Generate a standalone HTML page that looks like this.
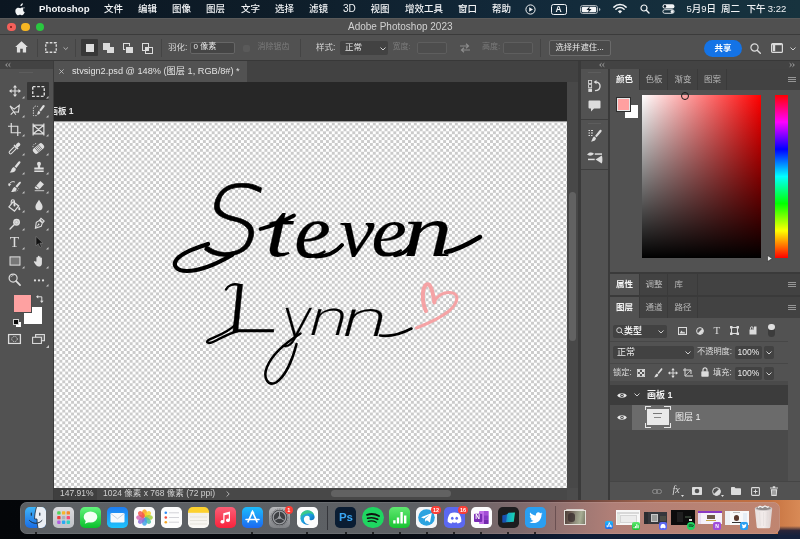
<!DOCTYPE html>
<html lang="zh-CN">
<head>
<meta charset="utf-8">
<title>Adobe Photoshop 2023</title>
<style>
*{box-sizing:border-box;margin:0;padding:0}
html,body{width:800px;height:539px;overflow:hidden;background:#05070b}
body{font-family:"Liberation Sans","Noto Sans CJK SC",sans-serif;font-size:9px;color:#ddd;position:relative;-webkit-font-smoothing:antialiased}
.abs{position:absolute}
.t{position:absolute;white-space:nowrap;line-height:12px;height:12px}
svg{position:absolute;overflow:visible}
/* ---------- menu bar ---------- */
#menubar{left:0;top:0;width:800px;height:18px;background:linear-gradient(90deg,#0b1621 0%,#0e1d29 35%,#12293a 65%,#17333e 100%)}
#menubar .t{color:#f2f4f6;font-size:9.5px;top:3px;font-weight:500}
/* ---------- ps window ---------- */
#titlebar{left:0;top:18px;width:800px;height:16px;background:#505050;border-top:1px solid #5a5a5a}
#optbar{left:0;top:34px;width:800px;height:27px;background:#515151;border-top:1px solid #3b3b3b;border-bottom:1px solid #383838}
#optbar .t{font-size:8.5px;color:#d6d6d6;top:6px}
#optbar .dim{color:#7b7b7b}
.inp{position:absolute;background:#454545;border:1px solid #666;border-radius:2px}
.sep{position:absolute;width:1px;background:#444}
/* ---------- tools ---------- */
#tools{left:0;top:61px;width:54px;height:438.600px;background:#525252;border-right:1.500px solid #3c3c3c}
#toolhead{left:0;top:0;width:53px;height:8px;background:#434343}
/* ---------- document ---------- */
#tabbar{left:54px;top:61px;width:524px;height:21px;background:#424242}
#doctab{left:0;top:0;width:193px;height:21px;background:#525252}
#canvasbg{left:54px;top:82px;width:513px;height:406px;background:#272727}
#checker{left:0;top:38.500px;width:513px;height:367.500px;border-top:1px solid #9a9a9a;
 background-color:#fff;
 background-image:conic-gradient(#cbcbcb 25%,transparent 0 50%,#cbcbcb 0 75%,transparent 0);
 background-size:5.860px 5.860px;background-position:-0.500px 0.500px}
#vscroll{left:567px;top:82px;width:11px;height:406px;background:#484848}
#vthumb{left:2px;top:110px;width:7px;height:149px;border-radius:4px;background:#626262}
#status{left:54px;top:488px;width:524px;height:11.600px;background:#484848}
#status .t{font-size:8.5px;color:#d0d0d0;top:-1px}
#hthumb{left:277px;top:2px;width:120px;height:7px;border-radius:4px;background:#626262}
.sigw{position:absolute;left:0;top:0;height:100px;line-height:100px;font-size:100px;font-family:"Liberation Serif",serif;color:#000;white-space:nowrap}
.sigw span{display:inline-block;vertical-align:top;height:100px;transform-origin:0 0}
/* ---------- right side ---------- */
#gap1{left:578px;top:61px;width:3px;height:438.600px;background:#3a3a3a}
#strip{left:581px;top:61px;width:27px;height:438.600px;background:#525252}
#striphead{left:0;top:0;width:27px;height:8px;background:#434343}
#gap2{left:608px;top:61px;width:2px;height:438.600px;background:#3a3a3a}
#right{left:610px;top:61px;width:190px;height:438.600px;background:#525252}
.ptabs{position:absolute;left:0;width:190px;background:#424242}
.ptab{position:absolute;top:0;height:100%;background:#424242;border-right:1px solid #3a3a3a}
.ptab.on{background:#525252}
.ptabs .t{font-size:8.5px;color:#b8b8b8}
.ptabs .t.on{color:#f4f4f4;font-weight:bold}
.dd{position:absolute;background:#424242;border-radius:2px}
#right .t{font-size:8.5px;color:#d8d8d8}
/* ---------- dock ---------- */
#dock{left:20.300px;top:501.700px;width:759.500px;height:32.800px;border-radius:7px;
 background:linear-gradient(90deg,#5b5f63 0%,#5d6064 52%,#7f6a6c 66%,#b07f77 78%,#c08570 100%);
 box-shadow:0 0 0 0.5px rgba(255,255,255,.18) inset}
.di{position:absolute;top:5px;width:22px;height:22px;border-radius:5px}
.dot{position:absolute;top:29px;width:2px;height:2px;border-radius:1px;background:#0b0b0b}
</style>
</head>
<body>
<div id="app" style="position:absolute;left:0;top:0;width:800px;height:539px;overflow:hidden;will-change:transform">
<!-- wallpaper bits visible under the window -->
<div class="abs" id="wall" style="left:0;top:499px;width:800px;height:40px;background:linear-gradient(90deg,#040609 0%,#06090e 52%,#3c2a30 66%,#a8684f 82%,#c5713f 96%,#d88a56 100%)"></div>
<div class="abs" style="left:0;top:534px;width:800px;height:5px;background:linear-gradient(90deg,#040609 0%,#070b12 50%,#0f1c34 72%,#10203a 100%)"></div>
<div class="abs" style="left:778px;top:526px;width:22px;height:13px;background:linear-gradient(180deg,rgba(40,30,50,0),#2a2438 35%,#14203c 75%)"></div>

<!-- MENUBAR -->
<div class="abs" id="menubar">
<svg style="left:14.500px;top:2.500px" width="10" height="12" viewBox="0 0 170 200"><path fill="#f2f4f6" d="M150 68c-1 1-22 12-22 39 0 31 27 42 28 42 0 1-4 15-14 29-9 12-18 25-32 25s-18-8-34-8c-16 0-22 9-35 9s-22-12-32-27C-3 158-10 126 2 102c9-18 27-29 45-29 14 0 26 9 34 9 8 0 21-10 37-10 6 0 28 1 42 21zM113 32c7-8 11-19 11-30 0-2 0-3 0-4-11 0-24 7-31 16-6 7-12 18-12 29 0 2 0 3 1 4 1 0 2 0 3 0 10 0 22-6 28-15z" transform="translate(10,4)"/></svg>
<span class="t" style="left:39px;font-weight:bold;font-size:9.700px">Photoshop</span>
<span class="t" style="left:104px">文件</span>
<span class="t" style="left:138px">编辑</span>
<span class="t" style="left:172px">图像</span>
<span class="t" style="left:206px">图层</span>
<span class="t" style="left:241px">文字</span>
<span class="t" style="left:275px">选择</span>
<span class="t" style="left:309px">滤镜</span>
<span class="t" style="left:343px;font-size:10px">3D</span>
<span class="t" style="left:370.5px">视图</span>
<span class="t" style="left:405px">增效工具</span>
<span class="t" style="left:458px">窗口</span>
<span class="t" style="left:492px">帮助</span>
<!-- status icons -->
<svg style="left:525px;top:3.5px" width="11" height="11" viewBox="0 0 11 11"><circle cx="5.5" cy="5.5" r="4.6" fill="none" stroke="#f2f4f6" stroke-width="1"/><path d="M4.2 3.2 8 5.5 4.2 7.8z" fill="#f2f4f6"/></svg>
<div class="abs" style="left:551px;top:3.5px;width:16px;height:11px;border:1.2px solid #f2f4f6;border-radius:2.5px"></div>
<span class="t" style="left:555.5px;top:3px;font-size:8.5px;font-weight:bold">A</span>
<svg style="left:580px;top:5px" width="21" height="9" viewBox="0 0 21 9"><rect x="0.5" y="0.5" width="17" height="8" rx="2.2" fill="none" stroke="#aeb5bb" stroke-width="1"/><rect x="1.8" y="1.8" width="14.4" height="5.4" rx="1.2" fill="#f2f4f6"/><path d="M19 3v3c.9-.2 1.4-.8 1.4-1.500S19.900 3.200 19 3z" fill="#aeb5bb"/><path d="M9.800 1.200 6.500 5h2.300L8 7.900 11.500 4H9.200z" fill="#0d1b27"/></svg>
<svg style="left:613px;top:4px" width="14" height="10" viewBox="0 0 14 10"><path d="M7 9.600 9.100 7.300a3 3 0 0 0-4.200 0z" fill="#f2f4f6"/><path d="M2.900 5.300a5.800 5.800 0 0 1 8.200 0" fill="none" stroke="#f2f4f6" stroke-width="1.500" stroke-linecap="round"/><path d="M0.900 3.100a8.600 8.600 0 0 1 12.200 0" fill="none" stroke="#f2f4f6" stroke-width="1.500" stroke-linecap="round"/></svg>
<svg style="left:640px;top:4px" width="10" height="10" viewBox="0 0 10 10"><circle cx="4" cy="4" r="3" fill="none" stroke="#f2f4f6" stroke-width="1.200"/><path d="M6.300 6.300 9 9" stroke="#f2f4f6" stroke-width="1.400" stroke-linecap="round"/></svg>
<svg style="left:662px;top:4px" width="13" height="10" viewBox="0 0 13 10"><rect x="0.500" y="0.300" width="12" height="4.200" rx="2.100" fill="#f2f4f6"/><circle cx="2.900" cy="2.400" r="1.300" fill="#0d1b27"/><rect x="0.900" y="5.700" width="11.200" height="3.600" rx="1.800" fill="none" stroke="#f2f4f6" stroke-width=".9"/><circle cx="10.100" cy="7.500" r="1.500" fill="#f2f4f6"/></svg>
<span class="t" style="left:686.500px">5月9日<span style="display:inline-block;width:4.800px"> </span>周二</span>
<span class="t" style="left:746.500px">下午<span style="display:inline-block;width:2.300px"></span>3:22</span>
</div>
<!-- TITLE -->
<div class="abs" id="titlebar">
<div class="abs" style="left:7px;top:3.500px;width:8.500px;height:8.500px;border-radius:50%;background:#f4605a"></div>
<div class="abs" style="left:10.200px;top:6.700px;width:2.200px;height:2.200px;border-radius:50%;background:#7a1410"></div>
<div class="abs" style="left:21.300px;top:3.500px;width:8.500px;height:8.500px;border-radius:50%;background:#f6b623"></div>
<div class="abs" style="left:35.700px;top:3.500px;width:8.500px;height:8.500px;border-radius:50%;background:#2ac840"></div>
<span class="t" style="left:348px;top:1.500px;font-size:10px;color:#d2d2d2">Adobe Photoshop 2023</span>
</div>
<!-- OPTIONS -->
<div class="abs" id="optbar">
<!-- coordinates inside optbar: y offset 35 -->
<svg style="left:15px;top:6px" width="13" height="12" viewBox="0 0 13 12"><path d="M6.500 0.300 0.200 6h1.700v5.600h3.300V7.800h2.600v3.800h3.300V6h1.700z" fill="#e0e0e0"/></svg>
<div class="sep" style="left:37px;top:4px;height:18px"></div>
<svg style="left:45px;top:7px" width="12" height="11" viewBox="0 0 12 11"><rect x="0.750" y="0.750" width="10.500" height="9.500" fill="none" stroke="#dcdcdc" stroke-width="1.300" stroke-dasharray="2.600 1.400"/></svg>
<svg style="left:63.200px;top:12px" width="5.500" height="3.200" viewBox="0 0 7 4"><path d="M0.700 0.500 3.500 3.200 6.300 0.500" fill="none" stroke="#cfcfcf" stroke-width="1"/></svg>
<div class="sep" style="left:75px;top:4px;height:18px"></div>
<div class="abs" style="left:81px;top:4px;width:17px;height:17px;background:#383838;border-radius:1px"></div>
<div class="abs" style="left:86px;top:9px;width:7.500px;height:7.500px;background:#dedede"></div>
<!-- add to selection -->
<div class="abs" style="left:103px;top:8px;width:7px;height:6.500px;background:#dcdcdc"></div>
<div class="abs" style="left:107px;top:11.500px;width:6.500px;height:6.500px;background:#dcdcdc"></div>
<!-- subtract -->
<div class="abs" style="left:122.500px;top:8px;width:7px;height:7px;border:1.200px solid #dcdcdc"></div>
<div class="abs" style="left:126px;top:11.500px;width:6.500px;height:6.500px;background:#dcdcdc;box-shadow:-0.8px -0.8px 0 #515151"></div>
<!-- intersect -->
<div class="abs" style="left:141.500px;top:8px;width:7.500px;height:7.500px;border:1.200px solid #dcdcdc"></div>
<div class="abs" style="left:145px;top:11.500px;width:7.500px;height:7.500px;border:1.200px solid #dcdcdc"></div>
<div class="abs" style="left:145px;top:11.500px;width:4px;height:4px;background:#dcdcdc"></div>
<div class="sep" style="left:161px;top:4px;height:18px"></div>
<span class="t" style="left:168px">羽化:</span>
<div class="inp" style="left:190px;top:7px;width:45px;height:12px"></div>
<span class="t" style="left:193.500px;font-size:8px;color:#e6e6e6">0 像素</span>
<div class="abs" style="left:243px;top:9.500px;width:7px;height:7px;border-radius:2px;background:#5a5a5a"></div>
<span class="t dim" style="left:257.500px;font-size:8px">消除锯齿</span>
<div class="sep" style="left:300px;top:4px;height:18px"></div>
<span class="t" style="left:316px">样式:</span>
<div class="dd" style="left:340px;top:6px;width:48px;height:14px"></div>
<span class="t" style="left:345px;color:#e6e6e6">正常</span>
<svg style="left:380px;top:11.500px" width="6" height="4" viewBox="0 0 6 4"><path d="M0.500 0.500 3 3 5.500 0.500" fill="none" stroke="#cfcfcf" stroke-width="1"/></svg>
<span class="t dim" style="left:392.500px;font-size:8px">宽度:</span>
<div class="inp" style="left:417px;top:7px;width:30px;height:12px;border-color:#5e5e5e;background:#4d4d4d"></div>
<svg style="left:459px;top:8px" width="12" height="10" viewBox="0 0 12 10"><path d="M1 3h8M7 0.800 9.500 3 7 5.200M11 7H3M5 4.800 2.500 7 5 9.200" fill="none" stroke="#8c8c8c" stroke-width="1.200"/></svg>
<span class="t dim" style="left:482px;font-size:8px">高度:</span>
<div class="inp" style="left:502.500px;top:7px;width:30px;height:12px;border-color:#5e5e5e;background:#4d4d4d"></div>
<div class="sep" style="left:540px;top:4px;height:18px"></div>
<div class="abs" style="left:549px;top:5px;width:62px;height:16px;border:1px solid #6a6a6a;border-radius:2px;background:#4a4a4a"></div>
<span class="t" style="left:555.500px;font-size:8.300px;color:#e8e8e8">选择并遮住...</span>
<div class="abs" style="left:704px;top:4.500px;width:38px;height:17px;border-radius:8.500px;background:#1473e6"></div>
<span class="t" style="left:714.500px;top:6.500px;color:#fff;font-weight:bold">共享</span>
<svg style="left:750px;top:7.500px" width="11" height="11" viewBox="0 0 11 11"><circle cx="4.500" cy="4.500" r="3.600" fill="none" stroke="#dcdcdc" stroke-width="1.200"/><path d="M7.200 7.200 10.300 10.300" stroke="#dcdcdc" stroke-width="1.400" stroke-linecap="round"/></svg>
<svg style="left:771px;top:8px" width="12" height="10" viewBox="0 0 12 10"><rect x="0.600" y="0.600" width="10.800" height="8.800" rx="1" fill="none" stroke="#dcdcdc" stroke-width="1.200"/><rect x="1.800" y="1.800" width="2.400" height="6.400" fill="#dcdcdc"/><rect x="1.200" y="0.600" width="9.600" height="1.600" fill="#dcdcdc"/></svg>
<svg style="left:789.500px;top:11.500px" width="6" height="4" viewBox="0 0 6 4"><path d="M0.500 0.500 3 3 5.500 0.500" fill="none" stroke="#cfcfcf" stroke-width="1"/></svg>
</div>
<!-- TOOLS -->
<div class="abs" id="tools"><div class="abs" id="toolhead"></div>
<svg style="left:4.500px;top:2px" width="6" height="4" viewBox="0 0 6 4"><path d="M2.500 0.300 0.700 2 2.500 3.700M5.300 0.300 3.500 2 5.300 3.700" fill="none" stroke="#bdbdbd" stroke-width=".8"/></svg>
<div class="abs" style="left:19px;top:11px;width:14px;height:1px;background:#666;opacity:.6"></div>
<div class="abs" style="left:27px;top:21px;width:22px;height:17.500px;background:#363636;border-radius:1px"></div>
<svg style="left:8.5px;top:24px" width="12" height="12" viewBox="0 0 14 14"><path d="M7 1.200V12.800M1.200 7H12.800" fill="none" stroke="#dedede" stroke-width="1.300"/><path d="M7 0 9.400 3H4.600zM7 14 4.600 11H9.400zM0 7 3 4.600V9.400zM14 7 11 9.400V4.600z" fill="#dedede"/></svg>
<svg style="left:21.5px;top:34.5px" width="2.500" height="2.500" viewBox="0 0 3 3"><path d="M3 0v3H0z" fill="#c4c4c4"/></svg>
<svg style="left:32px;top:23.5px" width="13" height="13" viewBox="0 0 14 14"><rect x="0.800" y="1.800" width="12.400" height="10.400" fill="none" stroke="#dedede" stroke-width="1.500" stroke-dasharray="3 1.700"/></svg>
<svg style="left:45.5px;top:34.5px" width="2.500" height="2.500" viewBox="0 0 3 3"><path d="M3 0v3H0z" fill="#c4c4c4"/></svg>
<svg style="left:8.5px;top:43px" width="12" height="12" viewBox="0 0 14 14"><path d="M1.200 2.200 6 6 12 1.500 11 9.500 5.500 9 2 12.500M5.500 9 3.500 6.200 1.200 2.200M5.500 9l2.500 3.500" fill="none" stroke="#dedede" stroke-width="1.300" stroke-width="1.100"/></svg>
<svg style="left:21.5px;top:53.5px" width="2.500" height="2.500" viewBox="0 0 3 3"><path d="M3 0v3H0z" fill="#c4c4c4"/></svg>
<svg style="left:32px;top:42.5px" width="13" height="13" viewBox="0 0 14 14"><path d="M5 12.500H1.500V5A3 3 0 0 1 6.500 3" fill="none" stroke="#dedede" stroke-width="1" stroke-dasharray="1.500 1.200"/><path d="M13.300 1.300c.6.600.4 1.400-.2 2.100L9.500 8.200 7.800 6.600 11.400 1.700c.6-.7 1.300-1 1.900-.4zM7.300 7.300 8.900 8.900C8.700 10.600 7.300 11.600 5.200 11.400 6.200 10.500 5.900 8.200 7.300 7.300z" fill="#dedede"/></svg>
<svg style="left:45.5px;top:53.5px" width="2.500" height="2.500" viewBox="0 0 3 3"><path d="M3 0v3H0z" fill="#c4c4c4"/></svg>
<svg style="left:8px;top:61.5px" width="13" height="13" viewBox="0 0 14 14"><path d="M3.500 0V10.500H14M0 3.500H10.500V14" fill="none" stroke="#dedede" stroke-width="1.300" stroke-width="1.500"/></svg>
<svg style="left:21.5px;top:72.5px" width="2.500" height="2.500" viewBox="0 0 3 3"><path d="M3 0v3H0z" fill="#c4c4c4"/></svg>
<svg style="left:32px;top:61.5px" width="13" height="13" viewBox="0 0 14 14"><path d="M1.200 2.200H12.800V11.800H1.200zM1.200 2.200 12.800 11.800M12.800 2.200 1.200 11.800M1.200 0.500V13.500M12.800 0.500V13.500" fill="none" stroke="#dedede" stroke-width="1.300" stroke-width="1.200"/></svg>
<svg style="left:45.5px;top:72.5px" width="2.500" height="2.500" viewBox="0 0 3 3"><path d="M3 0v3H0z" fill="#c4c4c4"/></svg>
<svg style="left:8px;top:80.5px" width="13" height="13" viewBox="0 0 14 14"><g transform="rotate(45 7 7)"><rect x="5.500" y="5" width="3" height="9.500" rx="1.500" fill="none" stroke="#dedede" stroke-width="1.100"/><rect x="4" y="3.800" width="6" height="1.700" fill="#dedede"/><rect x="5.100" y="-1" width="3.800" height="5" rx="1.800" fill="#dedede"/></g></svg>
<svg style="left:21.5px;top:91.5px" width="2.500" height="2.500" viewBox="0 0 3 3"><path d="M3 0v3H0z" fill="#c4c4c4"/></svg>
<svg style="left:32px;top:80.5px" width="13" height="13" viewBox="0 0 14 14"><g transform="rotate(-40 7 7)"><rect x="0.500" y="3.600" width="13" height="6.800" rx="2.400" fill="#dedede"/><path d="M4.600 3.500v7M6.200 3.500v7M7.800 3.500v7M9.400 3.500v7" stroke="#525252" stroke-width=".7"/></g><path d="M1 5.500C1 2.500 3.500 1 5.500 2" fill="none" stroke="#dedede" stroke-width=".9" stroke-dasharray="1.200 1"/></svg>
<svg style="left:45.5px;top:91.5px" width="2.500" height="2.500" viewBox="0 0 3 3"><path d="M3 0v3H0z" fill="#c4c4c4"/></svg>
<svg style="left:8.5px;top:100px" width="12" height="12" viewBox="0 0 14 14"><path d="M13 0.600c.7.600.5 1.400-.1 2.100L8.600 8.100 6.500 6.300 10.900 1c.6-.7 1.400-.9 2.100-.4zM5.700 7 8 9C8.300 12 5.200 14 0.800 13.300 3 12 2.600 7.800 5.700 7z" fill="#dedede"/></svg>
<svg style="left:21.5px;top:110.5px" width="2.500" height="2.500" viewBox="0 0 3 3"><path d="M3 0v3H0z" fill="#c4c4c4"/></svg>
<svg style="left:32.5px;top:100px" width="12" height="12" viewBox="0 0 14 14"><path d="M7 0.800a2.300 2.300 0 0 1 2.300 2.300c0 1.200-1 1.700-1 3.200V7.500H12.500V10H1.500V7.500H5.700V6.300c0-1.500-1-2-1-3.200A2.300 2.300 0 0 1 7 0.800zM1.500 11H12.500V12.700H1.500z" fill="#dedede"/></svg>
<svg style="left:45.5px;top:110.5px" width="2.500" height="2.500" viewBox="0 0 3 3"><path d="M3 0v3H0z" fill="#c4c4c4"/></svg>
<svg style="left:8px;top:118.5px" width="13" height="13" viewBox="0 0 14 14"><g transform="translate(2.500,1.500) scale(.85)"><path d="M13 0.600c.7.600.5 1.400-.1 2.100L8.600 8.100 6.500 6.300 10.900 1c.6-.7 1.400-.9 2.100-.4zM5.700 7 8 9C8.300 12 5.200 14 0.800 13.300 3 12 2.600 7.800 5.700 7z" fill="#dedede"/></g><path d="M1 6A4.500 4.500 0 0 1 7.500 2.200" fill="none" stroke="#dedede" stroke-width="1"/><path d="M0 3.800 3.500 4.200 1.200 7z" fill="#dedede"/><path d="M8 12.500A5 5 0 0 0 11.500 9" fill="none" stroke="#dedede" stroke-width=".8" stroke-dasharray="1 1"/></svg>
<svg style="left:21.5px;top:129.5px" width="2.500" height="2.500" viewBox="0 0 3 3"><path d="M3 0v3H0z" fill="#c4c4c4"/></svg>
<svg style="left:32.5px;top:119px" width="12" height="12" viewBox="0 0 14 14"><path d="M8.500 1.300 12.800 5 7.600 10.800H4L1.800 8.900z" fill="#dedede"/><path d="M3.300 6.800 7.700 10.600" stroke="#525252" stroke-width=".9"/><path d="M2 12.500H13" stroke="#dedede" stroke-width="1"/></svg>
<svg style="left:45.5px;top:129.5px" width="2.500" height="2.500" viewBox="0 0 3 3"><path d="M3 0v3H0z" fill="#c4c4c4"/></svg>
<svg style="left:8px;top:137.5px" width="13" height="13" viewBox="0 0 14 14"><path d="M5.500 3 11.500 7.500 7 13 1 8.500z" fill="none" stroke="#dedede" stroke-width="1.300" stroke-width="1.200"/><path d="M3.500 5V2.500a1.700 1.700 0 0 1 3.400 0V6" fill="none" stroke="#dedede" stroke-width="1.300" stroke-width="1"/><path d="M7 5.200 7 7" stroke="#dedede" stroke-width="2" stroke-linecap="round"/><path d="M11.500 7.500c1 1.300 1.800 2.600 1.800 3.500a1.100 1.100 0 0 1-2.200 0c0-.9.400-2.200.4-3.500z" fill="#dedede"/></svg>
<svg style="left:21.5px;top:148.5px" width="2.500" height="2.500" viewBox="0 0 3 3"><path d="M3 0v3H0z" fill="#c4c4c4"/></svg>
<svg style="left:32.5px;top:138px" width="12" height="12" viewBox="0 0 14 14"><path d="M7 0.800C8.500 3.800 11.200 6 11.200 9A4.200 4.200 0 0 1 2.800 9C2.800 6 5.500 3.800 7 0.800z" fill="#dedede"/></svg>
<svg style="left:45.5px;top:148.5px" width="2.500" height="2.500" viewBox="0 0 3 3"><path d="M3 0v3H0z" fill="#c4c4c4"/></svg>
<svg style="left:8.5px;top:156.5px" width="12" height="12" viewBox="0 0 14 14"><circle cx="8.800" cy="5" r="4" fill="#dedede"/><circle cx="8.800" cy="5" r="2" fill="none" stroke="#9a9a9a" stroke-width=".6"/><path d="M6 8 1.200 12.800" stroke="#dedede" stroke-width="1.600" stroke-linecap="round"/></svg>
<svg style="left:21.5px;top:167px" width="2.500" height="2.500" viewBox="0 0 3 3"><path d="M3 0v3H0z" fill="#c4c4c4"/></svg>
<svg style="left:32.5px;top:156.5px" width="12" height="12" viewBox="0 0 14 14"><g transform="rotate(40 7 7)"><path d="M7 13.500 3.300 7.500 4.800 3.500H9.200L10.700 7.500z" fill="none" stroke="#dedede" stroke-width="1.300" stroke-width="1.100"/><path d="M7 13V8.500" stroke="#dedede" stroke-width=".9"/><circle cx="7" cy="7.600" r="1" fill="#dedede"/><rect x="4.600" y="0.500" width="4.800" height="2.200" fill="none" stroke="#dedede" stroke-width="1.300" stroke-width="1"/></g></svg>
<svg style="left:45.5px;top:167px" width="2.500" height="2.500" viewBox="0 0 3 3"><path d="M3 0v3H0z" fill="#c4c4c4"/></svg>
<span class="t" style="left:7.500px;top:172px;width:14px;height:18px;line-height:18px;text-align:center;font-family:'Liberation Serif',serif;font-size:15.500px;color:#dedede">T</span>
<svg style="left:21.5px;top:185.5px" width="2.500" height="2.500" viewBox="0 0 3 3"><path d="M3 0v3H0z" fill="#c4c4c4"/></svg>
<svg style="left:32.5px;top:175px" width="12" height="12" viewBox="0 0 14 14"><path d="M3.500 0.500V11.500L6.200 9 8 13.200 9.800 12.400 8 8.300H11.600z" fill="#111" stroke="#8a8a8a" stroke-width=".6"/></svg>
<svg style="left:45.5px;top:185.5px" width="2.500" height="2.500" viewBox="0 0 3 3"><path d="M3 0v3H0z" fill="#c4c4c4"/></svg>
<svg style="left:8.5px;top:194px" width="12" height="12" viewBox="0 0 14 14"><rect x="1.200" y="2.200" width="11.600" height="9.600" fill="#777" stroke="#dedede" stroke-width="1.200"/></svg>
<svg style="left:21.5px;top:204.5px" width="2.500" height="2.500" viewBox="0 0 3 3"><path d="M3 0v3H0z" fill="#c4c4c4"/></svg>
<svg style="left:32.5px;top:194px" width="12" height="12" viewBox="0 0 14 14"><path d="M4 7.500V3a.8.800 0 0 1 1.600 0V6.500 1.800a.8.800 0 0 1 1.600 0V6.300 2.200a.8.800 0 0 1 1.600 0V6.600 3.600a.8.800 0 0 1 1.600 0V9.500c0 2.500-1.500 4-3.800 4C4.500 13.500 3.500 12 1.200 8.500 0.600 7.600 1.800 6.800 2.600 7.700z" fill="#dedede"/></svg>
<svg style="left:45.5px;top:204.5px" width="2.500" height="2.500" viewBox="0 0 3 3"><path d="M3 0v3H0z" fill="#c4c4c4"/></svg>
<svg style="left:8px;top:212px" width="13" height="13" viewBox="0 0 14 14"><circle cx="5.500" cy="5.500" r="4.300" fill="none" stroke="#dedede" stroke-width="1.300" stroke-width="1.200"/><path d="M8.800 8.800 13 13" stroke="#dedede" stroke-width="1.800" stroke-linecap="round"/><path d="M3 4.500A3 3 0 0 1 6 2.700" fill="none" stroke="#dedede" stroke-width=".7"/></svg>
<svg style="left:32.5px;top:212.5px" width="12" height="12" viewBox="0 0 14 14"><circle cx="2.300" cy="7.500" r="1.300" fill="#dedede"/><circle cx="7" cy="7.500" r="1.300" fill="#dedede"/><circle cx="11.700" cy="7.500" r="1.300" fill="#dedede"/></svg>
<svg style="left:45.5px;top:223px" width="2.500" height="2.500" viewBox="0 0 3 3"><path d="M3 0v3H0z" fill="#c4c4c4"/></svg>
<div class="abs" style="left:24px;top:245.500px;width:18px;height:17.500px;background:#fff"></div>
<div class="abs" style="left:12.500px;top:233px;width:19px;height:18.500px;background:#fea1a1;border:1px solid #4a4a4a;border-left-color:#525252;border-top-color:#525252"></div>
<svg style="left:36px;top:234px" width="8" height="8" viewBox="0 0 8 8"><path d="M1.500 1.800H5.800V6.200" fill="none" stroke="#dedede" stroke-width="1"/><path d="M0 1.800 2.200 0V3.600zM5.800 8 4 5.800H7.600z" fill="#dedede"/></svg>
<div class="abs" style="left:15.500px;top:260.500px;width:5px;height:5px;background:#fff"></div><div class="abs" style="left:13px;top:258px;width:5.500px;height:5.500px;background:#0a0a0a;border:1px solid #d0d0d0"></div>
<svg style="left:8px;top:273px" width="13" height="10" viewBox="0 0 13 11" preserveAspectRatio="none"><rect x="0.600" y="0.600" width="11.800" height="9.800" fill="none" stroke="#dedede" stroke-width="1.300"/><circle cx="6.500" cy="5.500" r="2.800" fill="none" stroke="#dedede" stroke-width=".9" stroke-dasharray="1.300 1"/></svg>
<svg style="left:32px;top:273px" width="13" height="10" viewBox="0 0 13 11" preserveAspectRatio="none"><rect x="3.600" y="0.600" width="8.800" height="6.800" fill="#6a6a6a" stroke="#dedede" stroke-width="1.100"/><rect x="0.600" y="3.600" width="8.800" height="6.800" fill="#525252" stroke="#dedede" stroke-width="1.100"/></svg>
<svg style="left:46px;top:283.500px" width="3" height="3" viewBox="0 0 3 3"><path d="M3 0v3H0z" fill="#c4c4c4"/></svg>
</div>
<!-- DOC -->
<div class="abs" id="tabbar"><div class="abs" id="doctab"></div>
<svg style="left:5px;top:8px" width="5" height="5" viewBox="0 0 5 5"><path d="M0.400 0.400 4.600 4.600M4.600 0.400 0.400 4.600" stroke="#c8c8c8" stroke-width=".8"/></svg>
<span class="t" style="left:18px;top:4px;font-size:9.200px;color:#e2e2e2">stvsign2.psd @ 148% (图层 1, RGB/8#) *</span>
</div>
<div class="abs" id="canvasbg" style="overflow:hidden"><div class="abs" id="checker"></div>
<span class="t" style="left:-4.500px;top:23px;font-size:8.500px;font-weight:bold;color:#e4e4e4">画板 1</span>
<div class="abs" id="sig" aria-label="Steven Lynn" style="left:0;top:0;width:513px;height:406px">
<div class="sigw"><span style="font-family:'DejaVu Sans',sans-serif;font-weight:200;-webkit-text-stroke:.6px #000;transform:matrix(0.989,0,-0.213,0.967,158.4,91.8)">S</span><span style="font-family:'Liberation Serif',serif;font-style:italic;-webkit-text-stroke:.3px #000;transform:matrix(0.960,0,0.000,0.765,148.2,110.3)">t</span><span style="font-family:'Liberation Serif',serif;font-style:italic;-webkit-text-stroke:.3px #000;transform:matrix(0.821,0,0.000,0.771,149.3,110.9)">e</span><span style="font-family:'Liberation Serif',serif;font-style:italic;-webkit-text-stroke:.3px #000;transform:matrix(0.791,0,0.000,0.723,149.2,113.9)">v</span><span style="font-family:'Liberation Serif',serif;font-style:italic;-webkit-text-stroke:.3px #000;transform:matrix(0.795,0,0.000,0.729,137.6,113.4)">e</span><span style="font-family:'Liberation Serif',serif;font-style:italic;-webkit-text-stroke:.3px #000;transform:matrix(0.988,0,0.000,0.745,125.1,111.8)">n</span></div>
<div class="sigw"><span style="font-family:'DejaVu Sans',sans-serif;font-weight:200;-webkit-text-stroke:.4px #000;transform:matrix(1.012,0,-0.066,0.658,172.0,194.4)">L</span><span style="font-family:'DejaVu Sans',sans-serif;font-weight:200;-webkit-text-stroke:.4px #000;transform:matrix(0.542,0,-0.064,0.531,174.6,210.1)">y</span><span style="font-family:'DejaVu Sans',sans-serif;font-weight:200;-webkit-text-stroke:.4px #000;transform:matrix(0.659,0,-0.128,0.473,145.8,213.5)">n</span><span style="font-family:'DejaVu Sans',sans-serif;font-weight:200;-webkit-text-stroke:.4px #000;transform:matrix(0.780,0,-0.130,0.482,115.1,213.3)">n</span></div>
<svg style="left:0;top:0" width="513" height="406" viewBox="54 82 513 406" fill="none" stroke="#000" stroke-linecap="round" stroke-linejoin="round"><path d="M232 255C220 262 202 271 187 271C176 271 172 265 177 259C183 252 196 248 208 244" stroke-width="4.200"/><path d="M260.500 229C272 226 284 221 294 215.500" stroke-width="3.800"/><path d="M316 256.500C327 256.500 336 252 342 245" stroke-width="3.800"/><path d="M395 255.500C402 254.500 407 251 410 246" stroke-width="3.600"/><path d="M446 252C458 250 470 243 480 237" stroke-width="4.500"/><path d="M236 324C229 332 215 337 209.500 339.500C204.500 342 208 344.500 214 341.500C222 337.500 229 333.500 238 331" stroke-width="2.400"/><path d="M226 289.500C228 285.500 233 283 239.500 285" stroke-width="2.400"/><path d="M296.500 344C293 358 286 376 276 382.500C268 386.500 262.500 378 267 367C271 357 282 345 300.500 333.500" stroke-width="2.500"/><path d="M380 335.500C391 337 402 333.500 411.500 328.500" stroke-width="2.600"/><path d="M416.500 328C428 323.500 441 317.500 449 311C455 306 458 300 456.500 296C454.500 291.500 446 291.500 441 294.500C437 297 435 299.500 434.300 302.500" stroke="#f5a3a5" stroke-width="3"/><path d="M434.300 302.500C433.500 296 432 288 429.300 284.800C426.500 282.500 423.500 286.500 423 292.500C422.500 299 423.500 306 426 311" stroke="#f5a3a5" stroke-width="4"/></svg>
</div>

</div>
<div class="abs" id="vscroll"><div class="abs" id="vthumb"></div></div>
<div class="abs" id="status"><div class="abs" style="left:0;top:0;width:43px;height:11.600px;background:#3f3f3f"></div><div class="abs" id="hthumb"></div>
<span class="t" style="left:6px">147.91%</span>
<span class="t" style="left:49px">1024 像素 x 768 像素 (72 ppi)</span>
<svg style="left:172px;top:3px" width="4" height="6" viewBox="0 0 4 6"><path d="M0.600 0.500 3.200 3 0.600 5.500" fill="none" stroke="#c8c8c8" stroke-width=".8"/></svg>
</div>
<div class="abs" style="left:567px;top:488px;width:11px;height:11.600px;background:#4c4c4c"></div>
<!-- RIGHT -->
<div class="abs" id="gap1"></div>
<div class="abs" id="strip"><div class="abs" id="striphead"></div>
<svg style="left:17.500px;top:2px" width="6" height="4" viewBox="0 0 6 4"><path d="M2.500 0.300 0.700 2 2.500 3.700M5.300 0.300 3.500 2 5.300 3.700" fill="none" stroke="#bdbdbd" stroke-width=".8"/></svg>
<div class="abs" style="left:7px;top:11px;width:13px;height:1px;background:#666;opacity:.6"></div>
<!-- history -->
<svg style="left:7px;top:18.500px" width="13" height="12" viewBox="0 0 14 13"><rect x="0.600" y="0.600" width="3.300" height="3.300" fill="none" stroke="#dcdcdc" stroke-width=".9"/><rect x="0.600" y="5" width="3.300" height="3.300" fill="none" stroke="#dcdcdc" stroke-width=".9"/><rect x="0.300" y="9.300" width="4" height="3.600" fill="#dcdcdc"/><path d="M7.500 11.500C11 11.500 13 9.300 13 6.500 13 4 11.300 2.300 8.500 2.300" fill="none" stroke="#dcdcdc" stroke-width="1.500"/><path d="M6 2.300 9.200 0V4.600z" fill="#dcdcdc"/></svg>
<!-- comment -->
<svg style="left:7px;top:38.500px" width="13" height="12" viewBox="0 0 13 12"><path d="M1.500 0.500H11.500A1 1 0 0 1 12.500 1.500V7.500A1 1 0 0 1 11.500 8.500H6L3 11.500V8.500H1.500A1 1 0 0 1 0.500 7.500V1.500A1 1 0 0 1 1.500 0.500z" fill="#dcdcdc"/></svg>
<div class="abs" style="left:0;top:57.500px;width:27px;height:1px;background:#3e3e3e"></div>
<div class="abs" style="left:7px;top:62px;width:13px;height:1px;background:#666;opacity:.6"></div>
<!-- brush settings -->
<svg style="left:6.500px;top:68px" width="14" height="14" viewBox="0 0 14 14"><path d="M13.300 1c.6.500.4 1.200-.1 1.900L8.600 8.300 7 6.900 11.500 1.300c.5-.6 1.200-.8 1.800-.3zM6.300 7.600 8 9.100C8 11.300 6 12.800 3 12.400 4.500 11.500 4.300 8.200 6.300 7.600z" fill="#dcdcdc"/><path d="M0.500 1.500h1.500M3 1.500h2M0.500 4h1.500M3 4h2M0.500 6.500h1.500M3 6.500h1.500" stroke="#dcdcdc" stroke-width="1.100"/></svg>
<!-- brushes -->
<svg style="left:5.500px;top:90.500px" width="15.500" height="12" viewBox="0 0 15.500 12"><path d="M0 2.600C2.200 0 5 0 7 1.800 5 3.900 2.200 4.300 0 2.600z" fill="#dcdcdc"/><path d="M7.800 1.300H15V2.800H7.800z" fill="#dcdcdc"/><path d="M1 6.700H7.700V8.200H1z" fill="#dcdcdc"/><path d="M8.500 7.500 14.800 3.500C15.600 5.500 15.600 9.500 14.800 11.500z" fill="#dcdcdc"/></svg>
<div class="abs" style="left:0;top:107.500px;width:27px;height:1px;background:#3e3e3e"></div>
</div>
<div class="abs" id="gap2"></div>
<div class="abs" id="right"></div>
<div class="abs" id="R" style="left:0;top:0;width:800px;height:539px">
<div class="abs" style="left:608px;top:61px;width:192px;height:8px;background:#434343"></div>
<svg style="left:789px;top:63px" width="6" height="4" viewBox="0 0 6 4"><path d="M0.700 0.300 2.500 2 0.700 3.700M3.500 0.300 5.300 2 3.500 3.700" fill="none" stroke="#bdbdbd" stroke-width=".8"/></svg>
<!-- color panel tabs -->
<div class="ptabs" style="left:610px;top:69px;height:20.500px">
 <div class="ptab on" style="left:0;width:29.500px"></div><div class="ptab" style="left:29.500px;width:28.500px"></div><div class="ptab" style="left:58px;width:29.500px"></div><div class="ptab" style="left:87.500px;width:29.500px"></div>
 <span class="t on" style="left:6px;top:4px">颜色</span><span class="t" style="left:35.500px;top:4px">色板</span><span class="t" style="left:64.500px;top:4px">渐变</span><span class="t" style="left:94px;top:4px">图案</span>
 <div class="abs" style="left:178px;top:8px;width:8px;height:5px;border-top:1px solid #969696;border-bottom:1px solid #969696"><div style="margin-top:1px;height:1px;background:#969696"></div></div>
</div>
<!-- swatches -->
<div class="abs" style="left:624.500px;top:105px;width:13px;height:13px;background:#fff"></div>
<div class="abs" style="left:615.500px;top:96.500px;width:15.500px;height:15.500px;background:#ffa0a0;border:1px solid #2e2e2e;box-shadow:0 0 0 1px #e6e6e6 inset"></div>
<!-- color field -->
<div class="abs" style="left:642px;top:95px;width:119px;height:163px;background:linear-gradient(180deg,rgba(0,0,0,0),#000),linear-gradient(90deg,#fff,#ff0000)"></div>
<div class="abs" style="left:681px;top:92px;width:8px;height:8px;border-radius:50%;border:1px solid #1a1a1a"></div>
<div class="abs" style="left:774.500px;top:95px;width:13px;height:163px;background:linear-gradient(180deg,#ff0000 0%,#ff00ff 16.600%,#0000ff 33.300%,#00ffff 50%,#00ff00 66.600%,#ffff00 83.300%,#ff0000 100%)"></div>
<svg style="left:767px;top:254.500px" width="6" height="7" viewBox="0 0 6 7"><path d="M0.500 0.500 5.300 3.500 0.500 6.500z" fill="#e8e8e8" stroke="#2a2a2a" stroke-width=".6"/></svg>
<!-- divider + properties tabs -->
<div class="abs" style="left:610px;top:271.500px;width:190px;height:2px;background:#3a3a3a"></div>
<div class="ptabs" style="left:610px;top:273.500px;height:21.500px">
 <div class="ptab on" style="left:0;width:29.500px"></div><div class="ptab" style="left:29.500px;width:28.500px"></div><div class="ptab" style="left:58px;width:29.500px"></div>
 <span class="t on" style="left:6px;top:4.500px">属性</span><span class="t" style="left:35.500px;top:4.500px">调整</span><span class="t" style="left:64.500px;top:4.500px">库</span>
 <div class="abs" style="left:178px;top:8px;width:8px;height:5px;border-top:1px solid #969696;border-bottom:1px solid #969696"><div style="margin-top:1px;height:1px;background:#969696"></div></div>
</div>
<div class="abs" style="left:610px;top:295px;width:190px;height:2px;background:#3a3a3a"></div>
<div class="ptabs" style="left:610px;top:297px;height:20.500px">
 <div class="ptab on" style="left:0;width:29.500px"></div><div class="ptab" style="left:29.500px;width:28.500px"></div><div class="ptab" style="left:58px;width:29.500px"></div>
 <span class="t on" style="left:6px;top:4px">图层</span><span class="t" style="left:35.500px;top:4px">通道</span><span class="t" style="left:64.500px;top:4px">路径</span>
 <div class="abs" style="left:178px;top:8px;width:8px;height:5px;border-top:1px solid #969696;border-bottom:1px solid #969696"><div style="margin-top:1px;height:1px;background:#969696"></div></div>
</div>
<!-- layers body: filter row -->
<div class="dd" style="left:612.500px;top:324.500px;width:54px;height:13px"></div>
<svg style="left:616px;top:327px" width="8" height="8" viewBox="0 0 8 8"><circle cx="3.200" cy="3.200" r="2.500" fill="none" stroke="#dcdcdc" stroke-width=".9"/><path d="M5 5 7.500 7.500" stroke="#dcdcdc" stroke-width="1"/></svg>
<span class="t" style="left:624px;top:324.500px;font-weight:bold;color:#e8e8e8">类型</span>
<svg style="left:657.500px;top:329.500px" width="6" height="4" viewBox="0 0 6 4"><path d="M0.500 0.500 3 3 5.500 0.500" fill="none" stroke="#cfcfcf" stroke-width="1"/></svg>
<svg style="left:678px;top:326.500px" width="9" height="8" viewBox="0 0 9 8"><rect x="0.500" y="0.500" width="8" height="7" fill="none" stroke="#dcdcdc" stroke-width="1"/><path d="M1.500 6.500 3.500 3.500 5 5.500 6 4.500 7.500 6.500z" fill="#dcdcdc"/></svg>
<svg style="left:696px;top:326.500px" width="8" height="8" viewBox="0 0 8 8"><circle cx="4" cy="4" r="3.400" fill="none" stroke="#dcdcdc" stroke-width="1"/><path d="M6.400 1.600A3.400 3.400 0 0 1 1.600 6.400z" fill="#dcdcdc"/></svg>
<span class="t" style="left:713.500px;top:324px;font-family:'Liberation Serif',serif;font-size:11px;color:#dcdcdc">T</span>
<svg style="left:730px;top:326px" width="9" height="9" viewBox="0 0 9 9"><rect x="1.500" y="1.500" width="6" height="6" fill="none" stroke="#dcdcdc" stroke-width="1"/><path d="M0 0h2.500v2.500H0zM6.500 0H9v2.500H6.500zM0 6.500h2.500V9H0zM6.500 6.500H9V9H6.500z" fill="#dcdcdc"/></svg>
<svg style="left:749px;top:326px" width="8" height="9" viewBox="0 0 8 9"><path d="M0.500 3.500H5V0.500H7.500V8.500H0.500z" fill="#dcdcdc"/><path d="M1.500 3.500V2A1.200 1.200 0 0 1 4 2V3.500" fill="none" stroke="#dcdcdc" stroke-width=".9"/></svg>
<div class="abs" style="left:768px;top:323.500px;width:6.500px;height:13.500px;border-radius:3.500px;background:#3c3c3c"></div>
<div class="abs" style="left:768px;top:323.500px;width:6.500px;height:6.500px;border-radius:50%;background:#e0e0e0"></div>
<div class="abs" style="left:610px;top:341px;width:178px;height:1px;background:#474747"></div>
<!-- blend row -->
<div class="dd" style="left:612.500px;top:345.500px;width:81.500px;height:13px"></div>
<span class="t" style="left:617px;top:345.500px;color:#e8e8e8">正常</span>
<svg style="left:685px;top:350.500px" width="6" height="4" viewBox="0 0 6 4"><path d="M0.500 0.500 3 3 5.500 0.500" fill="none" stroke="#cfcfcf" stroke-width="1"/></svg>
<span class="t" style="left:697px;top:345.500px;font-size:8.200px">不透明度:</span>
<div class="dd" style="left:735px;top:345.500px;width:27px;height:13px"></div>
<span class="t" style="left:737.500px;top:345.500px;color:#eee;font-size:8.500px">100%</span>
<div class="dd" style="left:763.500px;top:345.500px;width:10px;height:13px"></div>
<svg style="left:765.500px;top:350.500px" width="6" height="4" viewBox="0 0 6 4"><path d="M0.500 0.500 3 3 5.500 0.500" fill="none" stroke="#cfcfcf" stroke-width="1"/></svg>
<div class="abs" style="left:610px;top:362.500px;width:178px;height:1px;background:#474747"></div>
<!-- lock row -->
<span class="t" style="left:613px;top:366.500px;font-size:8.200px">锁定:</span>
<svg style="left:637px;top:368.500px" width="8" height="8" viewBox="0 0 8 8"><rect x="0.400" y="0.400" width="7.200" height="7.200" fill="none" stroke="#dcdcdc" stroke-width=".8"/><path d="M0.800 0.800h2.100v2.100H0.800zM5 0.800h2.200v2.100H5zM2.900 2.900H5V5H2.900zM0.800 5h2.100v2.200H0.800zM5 5h2.200v2.200H5z" fill="#dcdcdc"/></svg>
<svg style="left:652.500px;top:367.500px" width="10" height="10" viewBox="0 0 14 14"><path d="M12.800 0.800c.6.500.4 1.200-.1 1.900L8 8.300 6.300 6.900 11 1.100c.5-.6 1.200-.8 1.800-.3zM5.600 7.600 7.400 9.100C7.500 11.500 5 13.300 1.500 12.800 3.300 11.800 3.200 8.200 5.600 7.600z" fill="#dcdcdc"/></svg>
<svg style="left:667.500px;top:367.500px" width="10" height="10" viewBox="0 0 14 14"><path d="M7 1.200V12.800M1.200 7H12.800" fill="none" stroke="#dcdcdc" stroke-width="1.300"/><path d="M7 0 9.400 3H4.600zM7 14 4.600 11H9.400zM0 7 3 4.600V9.400zM14 7 11 9.400V4.600z" fill="#dcdcdc"/></svg>
<svg style="left:683px;top:367.500px" width="10" height="10" viewBox="0 0 10 10"><path d="M2 0V8H10M0 2H8V6" fill="none" stroke="#dcdcdc" stroke-width="1"/><path d="M2.500 7.500 8 2" stroke="#dcdcdc" stroke-width=".7"/></svg>
<svg style="left:700.500px;top:367px" width="8" height="10" viewBox="0 0 8 10"><rect x="0.300" y="4.300" width="7.400" height="5.400" rx=".8" fill="#dcdcdc"/><path d="M2 4.500V2.800A2 2 0 0 1 6 2.800V4.500" fill="none" stroke="#dcdcdc" stroke-width="1.200"/></svg>
<span class="t" style="left:713px;top:366.500px;font-size:8.200px">填充:</span>
<div class="dd" style="left:735px;top:366.500px;width:27px;height:13px"></div>
<span class="t" style="left:737.500px;top:366.500px;color:#eee;font-size:8.500px">100%</span>
<div class="dd" style="left:763.500px;top:366.500px;width:10px;height:13px"></div>
<svg style="left:765.500px;top:371.500px" width="6" height="4" viewBox="0 0 6 4"><path d="M0.500 0.500 3 3 5.500 0.500" fill="none" stroke="#cfcfcf" stroke-width="1"/></svg>
<!-- layer list -->
<div class="abs" style="left:610px;top:381px;width:178px;height:100px;background:#4a4a4a"></div>
<div class="abs" style="left:610px;top:385px;width:178px;height:19.500px;background:#3c3c3c"></div>
<div class="abs" style="left:632px;top:404.500px;width:156px;height:25px;background:#6b6b6b"></div>
<div class="abs" style="left:610px;top:404.500px;width:22px;height:25px;background:#4e4e4e"></div>
<svg style="left:616.500px;top:391.500px" width="10" height="7" viewBox="0 0 10 7"><path d="M0.200 3.500C2 0.500 8 0.500 9.800 3.500 8 6.500 2 6.500 0.200 3.500z" fill="#e8e8e8"/><circle cx="5" cy="3.500" r="1.700" fill="#3c3c3c"/><circle cx="5" cy="3.500" r=".8" fill="#e8e8e8"/></svg>
<svg style="left:616.500px;top:413.500px" width="10" height="7" viewBox="0 0 10 7"><path d="M0.200 3.500C2 0.500 8 0.500 9.800 3.500 8 6.500 2 6.500 0.200 3.500z" fill="#e8e8e8"/><circle cx="5" cy="3.500" r="1.700" fill="#4e4e4e"/><circle cx="5" cy="3.500" r=".8" fill="#e8e8e8"/></svg>
<svg style="left:634px;top:393px" width="6" height="4" viewBox="0 0 6 4"><path d="M0.500 0.500 3 3 5.500 0.500" fill="none" stroke="#cfcfcf" stroke-width="1"/></svg>
<span class="t" style="left:647px;top:389px;font-weight:bold;color:#f0f0f0">画板 1</span>
<!-- thumbnail -->
<div class="abs" style="left:644.500px;top:406px;width:26.500px;height:21.500px;border:1px solid #e8e8e8"></div>
<div class="abs" style="left:647px;top:408.500px;width:21.500px;height:16.500px;background:#e9e9e9"></div>
<div class="abs" style="left:651px;top:405px;width:13px;height:24px;background:#6b6b6b"></div>
<div class="abs" style="left:643px;top:410px;width:30px;height:13px;background:#6b6b6b"></div>
<div class="abs" style="left:647px;top:408.500px;width:21.500px;height:16.500px;background:#e9e9e9"></div>
<div class="abs" style="left:653px;top:413px;width:9px;height:1px;background:#777"></div><div class="abs" style="left:654px;top:416.500px;width:7px;height:1px;background:#888"></div>
<span class="t" style="left:675px;top:411px;color:#f0f0f0">图层 1</span>
<!-- bottom icons -->
<div class="abs" style="left:610px;top:481px;width:190px;height:18.600px;background:#525252;border-top:1px solid #454545"></div>
<svg style="left:652px;top:488.500px" width="10" height="5" viewBox="0 0 10 5"><rect x="0.500" y="0.500" width="5" height="4" rx="2" fill="none" stroke="#8d8d8d" stroke-width="1"/><rect x="4.500" y="0.500" width="5" height="4" rx="2" fill="none" stroke="#8d8d8d" stroke-width="1"/></svg>
<span class="t" style="left:672.500px;top:484px;font-style:italic;font-size:10px;font-family:'Liberation Serif',serif;color:#dcdcdc">fx</span>
<svg style="left:680.500px;top:494.500px" width="3" height="2" viewBox="0 0 3 2"><path d="M0 0H3L1.500 2z" fill="#dcdcdc"/></svg>
<svg style="left:691.500px;top:487px" width="10" height="8" viewBox="0 0 10 8"><rect x="0" y="0" width="10" height="8" rx=".8" fill="#dcdcdc"/><circle cx="5" cy="4" r="2.300" fill="#525252"/></svg>
<svg style="left:711.500px;top:486.500px" width="9" height="9" viewBox="0 0 9 9"><circle cx="4.500" cy="4.500" r="3.900" fill="none" stroke="#dcdcdc" stroke-width="1"/><path d="M7.300 1.700A3.900 3.900 0 0 1 1.700 7.300z" fill="#dcdcdc"/></svg>
<svg style="left:720.500px;top:494.500px" width="3" height="2" viewBox="0 0 3 2"><path d="M0 0H3L1.500 2z" fill="#dcdcdc"/></svg>
<svg style="left:730.500px;top:487px" width="10" height="8" viewBox="0 0 10 8"><path d="M0 0.800A.8.800 0 0 1 .8 0H3.500L4.500 1.200H9.200A.8.800 0 0 1 10 2V7.200A.8.800 0 0 1 9.200 8H.8A.8.800 0 0 1 0 7.200z" fill="#dcdcdc"/></svg>
<svg style="left:750.500px;top:486.500px" width="9" height="9" viewBox="0 0 9 9"><rect x="0.600" y="0.600" width="7.800" height="7.800" rx=".8" fill="none" stroke="#dcdcdc" stroke-width="1.100"/><path d="M4.500 2.500V6.500M2.500 4.500H6.500" stroke="#dcdcdc" stroke-width="1"/></svg>
<svg style="left:770px;top:486px" width="8" height="10" viewBox="0 0 8 10"><path d="M0 1.500H8V2.600H0zM2.800 0.300H5.200V1.500H2.800zM0.800 3.200H7.200L6.700 10H1.300z" fill="#dcdcdc"/><path d="M2.800 4.300V8.800M4 4.300V8.800M5.200 4.300V8.800" stroke="#525252" stroke-width=".6"/></svg>

</div>
<!-- DOCK -->
<div class="abs" id="dock"></div>
<div class="abs" id="D" style="left:0;top:0;width:800px;height:539px">
<div class="abs" style="left:25.4px;top:506.5px;width:21px;height:21px;border-radius:4.8px;background:linear-gradient(180deg,#3fb4f7,#1a6de4);overflow:hidden;"><svg style="left:0;top:0" width="21" height="21" viewBox="0 0 21 21"><path d="M11.500 0C10.300 4 9.600 8 9.600 12H12C12 15 12.300 18 13 21H21V0z" fill="#e9eef4"/><path d="M6.300 6V8.200M14.800 6V8.200" stroke="#1b2a3a" stroke-width="1.100" stroke-linecap="round"/><path d="M4.500 13.500C8 17.300 13.500 17.300 17 13.500" fill="none" stroke="#1b2a3a" stroke-width="1" stroke-linecap="round"/><path d="M11.500 0C10.300 4 9.600 8 9.600 12H12C12 15 12.300 18 13 21" fill="none" stroke="#1b2a3a" stroke-width=".8"/></svg></div>
<div class="dot" style="left:34.7px;top:531.500px"></div>
<div class="abs" style="left:52.52px;top:506.5px;width:21px;height:21px;border-radius:4.8px;background:linear-gradient(180deg,#dcdce0,#bfc1c6);overflow:hidden;"><svg style="left:0;top:0" width="21" height="21" viewBox="0 0 21 21"><rect x="4.2" y="4.2" width="3.400" height="3.400" rx=".9" fill="#51d45b"/><rect x="8.9" y="4.2" width="3.400" height="3.400" rx=".9" fill="#f8b52a"/><rect x="13.6" y="4.2" width="3.400" height="3.400" rx=".9" fill="#f5872d"/><rect x="4.2" y="8.9" width="3.400" height="3.400" rx=".9" fill="#ee3b3b"/><rect x="8.9" y="8.9" width="3.400" height="3.400" rx=".9" fill="#a9b1ba"/><rect x="13.6" y="8.9" width="3.400" height="3.400" rx=".9" fill="#fa4a7a"/><rect x="4.2" y="13.6" width="3.400" height="3.400" rx=".9" fill="#b15ce2"/><rect x="8.9" y="13.6" width="3.400" height="3.400" rx=".9" fill="#29a9f4"/><rect x="13.6" y="13.6" width="3.400" height="3.400" rx=".9" fill="#2fd3c0"/></svg></div>
<div class="abs" style="left:79.64px;top:506.5px;width:21px;height:21px;border-radius:4.8px;background:linear-gradient(180deg,#63f57d,#0bbf2b);overflow:hidden;"><svg style="left:0;top:0" width="21" height="21" viewBox="0 0 21 21"><ellipse cx="10.500" cy="10" rx="6.800" ry="5.600" fill="#f4fff4"/><path d="M6 13.500 4.800 16.800 9 15z" fill="#f4fff4"/></svg></div>
<div class="abs" style="left:106.76px;top:506.5px;width:21px;height:21px;border-radius:4.8px;background:linear-gradient(180deg,#1d7cf2,#1fc3fb);overflow:hidden;"><svg style="left:0;top:0" width="21" height="21" viewBox="0 0 21 21"><rect x="3.500" y="6" width="14" height="9.500" rx="1.200" fill="#f6f9fc"/><path d="M3.800 6.500 10.500 11.800 17.200 6.500" fill="none" stroke="#b8c6d6" stroke-width=".8"/></svg></div>
<div class="abs" style="left:133.88px;top:506.5px;width:21px;height:21px;border-radius:4.8px;background:#fbfbfb;overflow:hidden;"><svg style="left:0;top:0" width="21" height="21" viewBox="0 0 21 21"><ellipse cx="10.500" cy="6.200" rx="2.500" ry="4" fill="#f9a21b" opacity=".85" transform="rotate(0 10.500 10.500)"/><ellipse cx="10.500" cy="6.200" rx="2.500" ry="4" fill="#f5d327" opacity=".85" transform="rotate(45 10.500 10.500)"/><ellipse cx="10.500" cy="6.200" rx="2.500" ry="4" fill="#a5cf3b" opacity=".85" transform="rotate(90 10.500 10.500)"/><ellipse cx="10.500" cy="6.200" rx="2.500" ry="4" fill="#4bc1a0" opacity=".85" transform="rotate(135 10.500 10.500)"/><ellipse cx="10.500" cy="6.200" rx="2.500" ry="4" fill="#3fa2e8" opacity=".85" transform="rotate(180 10.500 10.500)"/><ellipse cx="10.500" cy="6.200" rx="2.500" ry="4" fill="#8c6fd9" opacity=".85" transform="rotate(225 10.500 10.500)"/><ellipse cx="10.500" cy="6.200" rx="2.500" ry="4" fill="#d667b2" opacity=".85" transform="rotate(270 10.500 10.500)"/><ellipse cx="10.500" cy="6.200" rx="2.500" ry="4" fill="#f2574b" opacity=".85" transform="rotate(315 10.500 10.500)"/></svg></div>
<div class="abs" style="left:161px;top:506.5px;width:21px;height:21px;border-radius:4.8px;background:#fdfdfd;overflow:hidden;"><svg style="left:0;top:0" width="21" height="21" viewBox="0 0 21 21"><circle cx="4.800" cy="5.800" r="1.300" fill="#2f8cf6"/><circle cx="4.800" cy="10.500" r="1.300" fill="#f24b3e"/><circle cx="4.800" cy="15.200" r="1.300" fill="#f5a623"/><path d="M8 5.800H18M8 10.500H18M8 15.200H18" stroke="#cfcfd4" stroke-width=".9"/></svg></div>
<div class="abs" style="left:188.12px;top:506.5px;width:21px;height:21px;border-radius:4.8px;background:linear-gradient(180deg,#fdd12e 0,#fdd12e 26%,#f2efe9 27%,#fbfaf7 100%);overflow:hidden;"><svg style="left:0;top:0" width="21" height="21" viewBox="0 0 21 21"><path d="M2 10H19M2 13.500H19M2 17H19" stroke="#d9d6cf" stroke-width=".6"/></svg></div>
<div class="abs" style="left:215.24px;top:506.5px;width:21px;height:21px;border-radius:4.8px;background:linear-gradient(180deg,#fb5e76,#f9233c);overflow:hidden;"><svg style="left:0;top:0" width="21" height="21" viewBox="0 0 21 21"><path d="M8.300 6.200 15 4.500V13.200A2 1.700 0 1 1 13.800 11.700V7.200L9.500 8.300V14.700A2 1.700 0 1 1 8.300 13.200z" fill="#fff"/></svg></div>
<div class="abs" style="left:242.36px;top:506.5px;width:21px;height:21px;border-radius:4.8px;background:linear-gradient(180deg,#1cbcfc,#1c69f0);overflow:hidden;"><svg style="left:0;top:0" width="21" height="21" viewBox="0 0 21 21"><path d="M10.500 4.800 6 14.800M10.500 4.800 15 14.800M9.300 6.300 10.500 4.300 11.700 6.300" fill="none" stroke="#fff" stroke-width="1.600" stroke-linecap="round"/><path d="M4 12.500H17" stroke="#fff" stroke-width="1.500" stroke-linecap="round"/></svg></div>
<div class="dot" style="left:251.2px;top:531.500px"></div>
<div class="abs" style="left:269.48px;top:506.5px;width:21px;height:21px;border-radius:4.8px;background:linear-gradient(180deg,#b9babd,#7f8185);overflow:hidden;"><svg style="left:0;top:0" width="21" height="21" viewBox="0 0 21 21"><circle cx="10.500" cy="10.500" r="7.800" fill="#3d3f43"/><circle cx="10.500" cy="10.500" r="6.300" fill="none" stroke="#9a9ca0" stroke-width="1.300"/><circle cx="10.500" cy="10.500" r="1.600" fill="#9a9ca0"/><path d="M10.500 10.500 10.500 4.500M10.500 10.500 15.700 13.500M10.500 10.500 5.300 13.500" stroke="#9a9ca0" stroke-width="1"/><circle cx="10.500" cy="10.500" r="8.600" fill="none" stroke="#77797d" stroke-width="1" stroke-dasharray="1.500 1"/></svg></div>
<div class="abs" style="left:284.7px;top:505.5px;width:8px;height:8px;border-radius:4px;background:#fb3e36;color:#fff;font-size:5.5px;line-height:8px;text-align:center;font-weight:bold">1</div>
<div class="abs" style="left:296.6px;top:506.5px;width:21px;height:21px;border-radius:4.8px;background:#fdfdfd;overflow:hidden;"><svg style="left:0;top:0" width="21" height="21" viewBox="0 0 21 21"><defs><linearGradient id="eg" x1="0" y1="0" x2="1" y2="1"><stop offset="0" stop-color="#35c1b0"/><stop offset=".5" stop-color="#1b9de2"/><stop offset="1" stop-color="#0c59a4"/></linearGradient></defs><path d="M10.500 3.300A7.200 7.200 0 0 1 17.700 10C17.700 12 16 13.300 14.300 13.300 12.800 13.300 12.300 12.600 12.600 11.800 13 10.600 12.300 8.800 10.200 8.800 8 8.800 6.600 10.800 6.900 13 7.300 15.800 9.800 17.700 12.800 17.300A7.200 7.200 0 1 1 10.500 3.300z" fill="url(#eg)"/><path d="M3.400 9.500A7.200 7.200 0 0 1 17.700 10C17.500 7.500 14.500 5.800 11.500 6.200 8 6.600 5.500 8 3.400 9.500z" fill="#3ccf7c" opacity=".8"/></svg></div>
<div class="dot" style="left:305.5px;top:531.500px"></div>
<div class="abs" style="left:326.500px;top:506px;width:1px;height:24px;background:rgba(20,20,25,.55)"></div>
<div class="abs" style="left:335.3px;top:506.5px;width:21px;height:21px;border-radius:4.8px;background:#0a1d33;overflow:hidden;"><span class="t" style="left:0;top:0;width:21px;height:21px;line-height:21.500px;text-align:center;font-size:11.500px;font-weight:bold;color:#3aa7f5;letter-spacing:-.3px">Ps</span></div>
<div class="dot" style="left:344.5px;top:531.500px"></div>
<div class="abs" style="left:362.35px;top:506.5px;width:21.500px;height:21.500px;border-radius:50%;background:#1fd661;overflow:hidden"><svg style="left:0;top:0" width="21" height="21" viewBox="0 0 21 21"><path d="M5 7.800C9 6.600 13.500 7 17 9" fill="none" stroke="#101410" stroke-width="1.900" stroke-linecap="round"/><path d="M5.600 11.200C9 10.300 12.500 10.600 15.700 12.300" fill="none" stroke="#101410" stroke-width="1.600" stroke-linecap="round"/><path d="M6.200 14.300C9 13.600 11.800 13.900 14.300 15.300" fill="none" stroke="#101410" stroke-width="1.300" stroke-linecap="round"/></svg></div>
<div class="dot" style="left:371.8px;top:531.500px"></div>
<div class="abs" style="left:389.4px;top:506.5px;width:21px;height:21px;border-radius:4.8px;background:linear-gradient(180deg,#5fe870,#19c332);overflow:hidden;"><svg style="left:0;top:0" width="21" height="21" viewBox="0 0 21 21"><path d="M4.200 16.500V13.200H6.600V16.500zM7.800 16.500V10.500H10.200V16.500zM11.400 16.500V5H13.800V16.500zM15 16.500V8.500H17.400V16.500z" fill="#fff"/></svg></div>
<div class="dot" style="left:398.5px;top:531.500px"></div>
<div class="abs" style="left:416.45px;top:506.5px;width:21px;height:21px;border-radius:4.8px;background:#f4f6f8;overflow:hidden;"><svg style="left:0;top:0" width="21" height="21" viewBox="0 0 21 21"><circle cx="10.500" cy="10.500" r="8.300" fill="#2aa3e0"/><path d="M5 10.300 15.800 6 14 15.500 10.800 13.200 9.300 14.800 9 12 13.500 8 7.800 11.500z" fill="#fff"/></svg></div>
<div class="abs" style="left:431.25px;top:505.5px;width:9.5px;height:8px;border-radius:4px;background:#fb3e36;color:#fff;font-size:5.5px;line-height:8px;text-align:center;font-weight:bold">12</div>
<div class="dot" style="left:426px;top:531.500px"></div>
<div class="abs" style="left:443.5px;top:506.5px;width:21px;height:21px;border-radius:4.8px;background:#5b68f0;overflow:hidden;"><svg style="left:0;top:0" width="21" height="21" viewBox="0 0 21 21"><path d="M6 6.500C7.500 5.700 9 5.400 10.500 5.400 12 5.400 13.500 5.700 15 6.500 16.800 9 17.600 11.800 17.300 14.800 16 15.800 14.700 16.300 13.500 16.500L12.700 15.200C9.500 16 11.500 16 8.300 15.200L7.500 16.500C6.300 16.300 5 15.800 3.700 14.800 3.400 11.800 4.200 9 6 6.500z" fill="#fff"/><ellipse cx="8.300" cy="11.300" rx="1.300" ry="1.500" fill="#5b68f0"/><ellipse cx="12.700" cy="11.300" rx="1.300" ry="1.500" fill="#5b68f0"/></svg></div>
<div class="abs" style="left:458.25px;top:505.5px;width:9.5px;height:8px;border-radius:4px;background:#fb3e36;color:#fff;font-size:5.5px;line-height:8px;text-align:center;font-weight:bold">16</div>
<div class="dot" style="left:453px;top:531.500px"></div>
<div class="abs" style="left:470.55px;top:506.5px;width:21px;height:21px;border-radius:4.8px;background:#fcfcfd;overflow:hidden;"><svg style="left:0;top:0" width="21" height="21" viewBox="0 0 21 21"><rect x="8" y="4" width="9.500" height="13" rx="1" fill="#c06ee8"/><rect x="13" y="4" width="4.500" height="4.300" fill="#a34dd6"/><rect x="13" y="8.300" width="4.500" height="4.300" fill="#8a38c2"/><rect x="13" y="12.600" width="4.500" height="4.400" fill="#7329ad"/><rect x="3" y="6.800" width="8.200" height="8.200" rx="1" fill="#7a2bb5"/></svg><span class="t" style="left:3px;top:6.800px;width:8.200px;height:8.200px;line-height:8.500px;text-align:center;font-size:6.500px;font-weight:bold;color:#fff">N</span></div>
<div class="dot" style="left:480px;top:531.500px"></div>
<div class="abs" style="left:497.6px;top:506.5px;width:21px;height:21px;border-radius:4.8px;background:#1d1d1f;overflow:hidden;"><svg style="left:0;top:0" width="21" height="21" viewBox="0 0 21 21"><defs><linearGradient id="tg" x1="0" y1="0" x2="1" y2="0"><stop offset="0" stop-color="#1d5fc9"/><stop offset=".45" stop-color="#1aa7c9"/><stop offset="1" stop-color="#18d6b0"/></linearGradient></defs><path d="M4.500 8.500 9 7.500 10.500 5.800 17 5.500 15.800 14.800 4.500 15.500z" fill="url(#tg)"/><path d="M4.500 8.500 9 7.500 8 15.300 4.500 15.500z" fill="#1746a8" opacity=".75"/></svg></div>
<div class="dot" style="left:507px;top:531.500px"></div>
<div class="abs" style="left:524.65px;top:506.5px;width:21px;height:21px;border-radius:4.8px;background:#2a9ff1;overflow:hidden;"><svg style="left:0;top:0" width="21" height="21" viewBox="0 0 21 21"><path d="M17.500 6.600C17 6.900 16.400 7 15.900 7.100 16.500 6.700 16.900 6.200 17.100 5.500 16.600 5.900 16 6.100 15.300 6.200 14.200 5 12.300 5.100 11.400 6.300 10.900 6.900 10.800 7.700 10.900 8.400 8.600 8.300 6.600 7.200 5.200 5.500 4.500 6.800 4.800 8.400 6.100 9.200 5.600 9.200 5.200 9.100 4.800 8.900 4.800 10.200 5.800 11.400 7.100 11.700 6.700 11.800 6.300 11.800 5.900 11.700 6.200 12.900 7.300 13.700 8.500 13.700 7.300 14.600 5.900 15 4.400 14.900 7.600 16.900 11.800 16.400 14.300 13.700 15.800 12.100 16.600 9.800 16.500 7.600 17 7.300 17.300 7 17.500 6.600z" fill="#fff"/></svg></div>
<div class="dot" style="left:534px;top:531.500px"></div>
<div class="abs" style="left:555px;top:506px;width:1px;height:24px;background:rgba(60,40,45,.45)"></div>
<div class="abs" style="left:566px;top:508.500px;width:18px;height:3px;background:#d9d2cc;border-radius:1px"></div>
<div class="abs" style="left:564px;top:510px;width:22px;height:15px;background:linear-gradient(100deg,#4a4038 0%,#6b5a52 25%,#8d8a7a 50%,#a7ad94 75%,#7a7a68 100%);border:1px solid #e6e0da"></div>
<div class="abs" style="left:568px;top:513px;width:7px;height:9px;border-radius:3px;background:#3b3030;opacity:.8"></div>
<div class="abs" style="left:604.500px;top:520.500px;width:8.500px;height:8.500px;border-radius:2px;background:linear-gradient(180deg,#1cbcfc,#1c69f0)"><svg style="left:0;top:0" width="8.500" height="8.500" viewBox="0 0 21 21"><path d="M10.500 4.800 6 14.800M10.500 4.800 15 14.800" fill="none" stroke="#fff" stroke-width="2" stroke-linecap="round"/><path d="M4 12.500H17" stroke="#fff" stroke-width="2" stroke-linecap="round"/></svg></div>
<div class="abs" style="left:616px;top:510px;width:24px;height:15px;background:#f7f7f7;overflow:hidden"><div class="abs" style="left:1px;top:2px;width:22px;height:1.500px;background:#d8d8d8"></div><div class="abs" style="left:4px;top:5px;width:17px;height:8px;background:#ececec;border:.5px solid #d5d5d5"></div><div class="abs" style="left:1px;top:4px;width:2.500px;height:10px;background:#e2e8e2"></div></div>
<div class="abs" style="left:632px;top:521.5px;width:8px;height:8px;border-radius:2px;background:linear-gradient(180deg,#5fe870,#19c332)"><svg style="left:0;top:0" width="8" height="8" viewBox="0 0 21 21"><path d="M4.200 16.500V13.200H6.600V16.500zM7.800 16.500V10.500H10.200V16.500zM11.400 16.500V5H13.800V16.500zM15 16.500V8.500H17.400V16.500z" fill="#fff"/></svg></div>
<div class="abs" style="left:643.5px;top:511.5px;width:23.5px;height:12.5px;background:#35373c;overflow:hidden"><div class="abs" style="left:7px;top:2.500px;width:7px;height:7.500px;background:#9a9c9a;border:.5px solid #c8c8c8"></div><div class="abs" style="left:0;top:0;width:4px;height:12.500px;background:#2a2c30"></div><div class="abs" style="left:16px;top:4px;width:6px;height:5px;background:#4a4c44"></div></div>
<div class="abs" style="left:658.5px;top:521.5px;width:8px;height:8px;border-radius:2px;background:#5b68f0"><svg style="left:0;top:0" width="8" height="8" viewBox="0 0 21 21"><path d="M6 6.500C9 5 12 5 15 6.500 16.800 9 17.600 11.800 17.300 14.800 15 16.300 13.500 16.500 13.500 16.500L12.700 15.200C10 16 11 16 8.300 15.200L7.500 16.500C6.300 16.300 5 15.800 3.700 14.800 3.400 11.800 4.200 9 6 6.500z" fill="#fff"/></svg></div>
<div class="abs" style="left:671px;top:510px;width:23.5px;height:15px;background:#0c0c0c;overflow:hidden"><div class="abs" style="left:6px;top:2px;width:6px;height:10px;background:#1e1e1e"></div><div class="abs" style="left:14px;top:6px;width:6px;height:2px;background:#2e3a2e"></div><div class="abs" style="left:18px;top:9px;width:3px;height:1.500px;background:#ddd"></div></div>
<div class="abs" style="left:686.5px;top:521.5px;width:8px;height:8px;border-radius:50%;background:#1fd661"><svg style="left:0;top:0" width="8" height="8" viewBox="0 0 21 21"><path d="M5 7.800C9 6.600 13.500 7 17 9M5.600 11.200C9 10.300 12.500 10.600 15.700 12.300" fill="none" stroke="#101410" stroke-width="2" stroke-linecap="round"/></svg></div>
<div class="abs" style="left:698px;top:511px;width:23.5px;height:13px;background:#f6f2fa;overflow:hidden"><div class="abs" style="left:0;top:0;width:23.500px;height:1.500px;background:#8a38c2"></div><div class="abs" style="left:9px;top:4px;width:8px;height:4px;background:#6e5a4a"></div><div class="abs" style="left:8px;top:9px;width:10px;height:1px;background:#c9a94a"></div><div class="abs" style="left:0;top:1.500px;width:3px;height:11.500px;background:#e9ddf3"></div></div>
<div class="abs" style="left:713px;top:521.5px;width:8px;height:8px;border-radius:2px;background:#a04ddb"><span class="t" style="left:0;top:0;width:8px;height:8px;line-height:8px;text-align:center;font-size:5px;font-weight:bold;color:#fff">N</span></div>
<div class="abs" style="left:725px;top:510.5px;width:23.5px;height:14px;background:#f8f9fa;overflow:hidden"><div class="abs" style="left:0;top:0;width:5px;height:14px;background:#eef1f4"></div><div class="abs" style="left:8px;top:1.500px;width:7px;height:1px;background:#bbb"></div><div class="abs" style="left:8.500px;top:4.500px;width:5px;height:5.500px;border-radius:2.500px;background:#5a3a2e"></div><div class="abs" style="left:7px;top:11px;width:9px;height:1.500px;background:#333"></div><div class="abs" style="left:18px;top:2px;width:4px;height:10px;background:#e6eef6"></div></div>
<div class="abs" style="left:740px;top:521.5px;width:8px;height:8px;border-radius:2px;background:#2a9ff1"><svg style="left:0;top:0" width="8" height="8" viewBox="0 0 21 21"><path d="M17.500 6.600C14.200 5 12.300 5.100 10.900 8.400 8.600 8.300 6.600 7.200 5.200 5.500 4.500 6.800 4.800 8.400 6.100 9.200 4.800 10.200 5.800 11.400 7.100 11.700 6.200 12.900 7.300 13.700 8.500 13.700 7.300 14.600 5.900 15 4.400 14.900 7.600 16.900 11.800 16.400 14.300 13.700 15.800 12.100 16.600 9.800 16.500 7.600z" fill="#fff"/></svg></div>
<svg style="left:754px;top:505px" width="19" height="24" viewBox="0 0 19 24"><defs><linearGradient id="tr" x1="0" y1="0" x2="1" y2="0"><stop offset="0" stop-color="#e9e6e6"/><stop offset=".5" stop-color="#f7f5f5"/><stop offset="1" stop-color="#dcd6d6"/></linearGradient></defs><path d="M0.800 3.500H18.200L16.300 22A1.500 1.500 0 0 1 14.800 23.300H4.200A1.500 1.500 0 0 1 2.700 22z" fill="url(#tr)" opacity=".93"/><ellipse cx="9.500" cy="3.500" rx="8.700" ry="2.600" fill="#cfc9c9"/><ellipse cx="9.500" cy="3.300" rx="7.300" ry="1.800" fill="#8f8a8a"/><path d="M4 2.800 6 1.200 8.500 2.500 11 0.800 13.500 2.300 15 1.800" fill="none" stroke="#f3f3f3" stroke-width="1.100"/><path d="M5.500 7 6.300 21M9.500 7V21M13.500 7 12.700 21" stroke="#e0dada" stroke-width=".7" opacity=".8"/></svg>
</div>
</div>
</body>
</html>
